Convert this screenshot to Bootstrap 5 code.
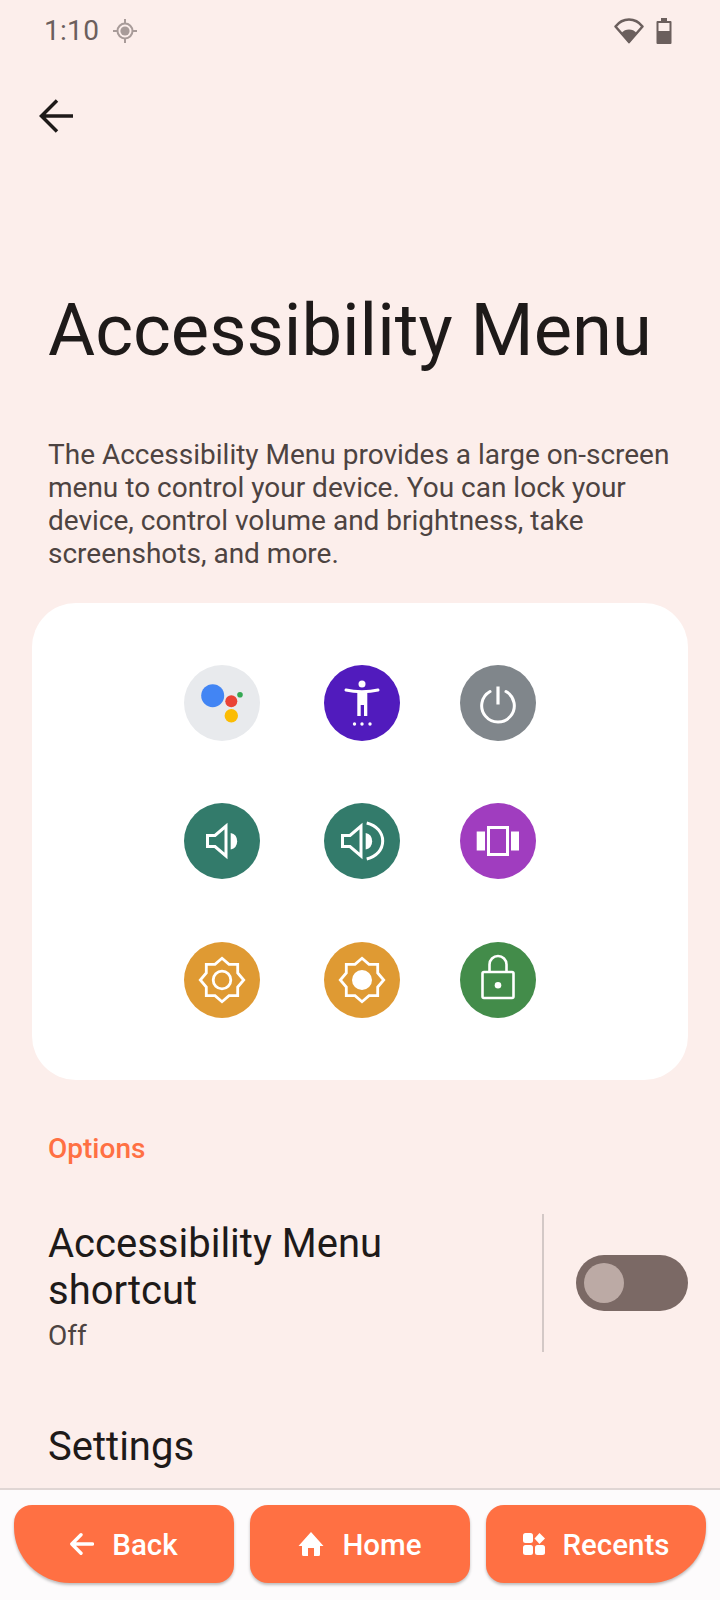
<!DOCTYPE html>
<html lang="en">
<head>
    <meta charset="UTF-8">
    <meta name="viewport" content="width=device-width, initial-scale=1.0">
    <title>Accessibility Menu</title>
    <link href="https://cdn.jsdelivr.net/npm/bootstrap@5.3.0/dist/css/bootstrap.min.css" rel="stylesheet">
    <style>
        html, body { height: 1600px; overflow: hidden; }
        body {
            background: #fceeeb;
            color: #1e1a19;
            font-family: Roboto, "Liberation Sans", sans-serif;
        }
        .screen { height: 1600px; }
        .status-strip { height: 62px; padding: 0 48px 0 44px; color: #6b5f5d; }
        .status-time { font-size: 28px; line-height: 1; letter-spacing: 0.3px; }
        .status-spot { margin-left: 14px; }
        .status-wifi { margin-left: auto; }
        .status-batt { margin-left: 12px; }
        .tool-strip { height: 108px; padding-left: 32px; }
        .page-title { font-size: 72.3px; font-weight: 400; line-height: 84px; margin: 0; padding: 119px 48px 0; }
        .page-desc { font-size: 28px; line-height: 33px; color: #4d4341; margin: 0; padding: 65px 48px 0; }
        .demo-card { margin: 33px 32px 0; height: 477px; border-radius: 44px; padding: 62px 0 0 152px; }
        .icon-grid { display: grid; grid-template-columns: 140px 136px 76px; grid-template-rows: 138px 139px 76px; }
        .icon-grid svg { display: block; width: 76px; height: 76px; }
        .section-label { color: #ff7043; font-size: 28px; font-weight: 500; line-height: 32px; padding: 53px 48px 0; }
        .option-row { padding: 49px 32px 0 48px; }
        .option-text { width: 495px; height: 138px; padding: 6px 48px 0 0; }
        .option-title { font-size: 40px; line-height: 47px; }
        .option-sub { font-size: 28px; line-height: 32px; color: #4d4341; margin-top: 6px; }
        .option-sep { width: 2px; height: 138px; background: #d3c8c6; }
        .toggle-track { width: 112px; height: 56px; margin-left: 32px; border-radius: 28px; background: #7b6965; padding: 8px; }
        .toggle-knob { width: 40px; height: 40px; border-radius: 50%; background: #bcaaa5; }
        .settings-row { font-size: 40px; line-height: 47px; padding: 71px 48px 0; }
        .bottom-strip { height: 112px; background: #fdfbfc; border-top: 2px solid #e0d6d4; padding: 15px 14px 0; gap: 16px; }
        .nav-key {
            width: 220px; height: 78px; padding: 0; gap: 18px;
            background: #ff7043; border: 0; border-radius: 18px; color: #fff;
            font-size: 29.5px; font-weight: 500; line-height: 1;
            box-shadow: 0 2px 3px rgba(0, 0, 0, .25);
        }
        .nav-key:hover { background: #ff7043; color: #fff; }
        .nav-key span { margin-top: 4px; }
        .nav-key.key-first { border-bottom-left-radius: 56px; }
        .nav-key.key-last { border-bottom-right-radius: 56px; }
    </style>
</head>
<body>
    <div class="screen d-flex flex-column">
        <div class="flex-grow-1 overflow-hidden">
            <div class="status-strip d-flex align-items-center">
                <span class="status-time">1:10</span>
                <svg class="status-spot" width="24" height="24" viewBox="0 0 24 24">
                    <circle cx="12" cy="12" r="7.5" fill="none" stroke="#a89b99" stroke-width="2"/>
                    <circle cx="12" cy="12" r="4.6" fill="#a89b99"/>
                    <path d="M12 0v4M12 20v4M0 12h4M20 12h4" stroke="#a89b99" stroke-width="2"/>
                </svg>
                <svg class="status-wifi" width="30" height="26" viewBox="0 0 30 26">
                    <path d="M1.5 8.500C5 4 10 1.500 15 1.500s10 2.500 13.500 7L15 24z" fill="none" stroke="#6b5f5d" stroke-width="2.500" stroke-linejoin="round"/>
                    <path d="M7.500 15C9.500 12.500 12 11.500 15 11.500s5.500 1 7.500 3.500L15 25.500z" fill="#6b5f5d"/>
                </svg>
                <svg class="status-batt" width="16" height="26" viewBox="0 0 16 26">
                    <path d="M5 0h6v3h3.500a1 1 0 0 1 1 1v21a1 1 0 0 1-1 1H1.500a1 1 0 0 1-1-1V4a1 1 0 0 1 1-1H5z" fill="#6b5f5d"/>
                    <rect x="2.500" y="5" width="11" height="8" fill="#fceeeb"/>
                </svg>
            </div>
            <div class="tool-strip d-flex align-items-center">
                <svg width="48" height="48" viewBox="0 0 48 48">
                    <path d="M41 24H10M25 8.500 9.500 24 25 39.500" fill="none" stroke="#1e1a19" stroke-width="3.500"/>
                </svg>
            </div>
            <h1 class="page-title">Accessibility Menu</h1>
            <p class="page-desc">The Accessibility Menu provides a large on-screen menu to control your device. You can lock your device, control volume and brightness, take screenshots, and more.</p>
            <div class="demo-card bg-white">
                <div class="icon-grid">
                    <svg viewBox="0 0 76 76">
                        <circle cx="38" cy="38" r="38" fill="#e8eaed"/>
                        <circle cx="28.700" cy="30.700" r="11.500" fill="#4285f4"/>
                        <circle cx="47.300" cy="36.300" r="6" fill="#ea4335"/>
                        <circle cx="47.300" cy="50.700" r="6.700" fill="#fbbc04"/>
                        <circle cx="56" cy="29.700" r="2.800" fill="#34a853"/>
                    </svg>
                    <svg viewBox="0 0 76 76">
                        <circle cx="38" cy="38" r="38" fill="#511bbd"/>
                        <circle cx="38" cy="19" r="3.500" fill="#fff"/>
                        <path d="M22 25c5 1.200 10.500 1.700 16 1.700s11-.5 16-1.700" fill="none" stroke="#fff" stroke-width="3" stroke-linecap="round"/>
                        <path d="M33.300 26h10v25H40V40h-3.300v11h-3.400z" fill="#fff"/>
                        <circle cx="30.500" cy="59" r="1.700" fill="#fff"/>
                        <circle cx="38" cy="59" r="1.700" fill="#fff"/>
                        <circle cx="46" cy="59" r="1.700" fill="#fff"/>
                    </svg>
                    <svg viewBox="0 0 76 76">
                        <circle cx="38" cy="38" r="38" fill="#80868b"/>
                        <path d="M30 26.500a16.300 16.300 0 1 0 16 0" fill="none" stroke="#fff" stroke-width="3" stroke-linecap="round"/>
                        <path d="M38 21.500v18" stroke="#fff" stroke-width="3.200"/>
                    </svg>
                    <svg viewBox="0 0 76 76">
                        <circle cx="38" cy="38" r="38" fill="#337b6b"/>
                        <path d="M23.500 32.500H31l11-9.500v30l-11-9.500h-7.500z" fill="none" stroke="#fff" stroke-width="3"/>
                        <path d="M46.700 30a8.500 8.500 0 0 1 0 16.500z" fill="#fff"/>
                    </svg>
                    <svg viewBox="0 0 76 76">
                        <circle cx="38" cy="38" r="38" fill="#337b6b"/>
                        <path d="M18.500 32.500H26l11-9.500v30l-11-9.500h-7.500z" fill="none" stroke="#fff" stroke-width="3"/>
                        <path d="M41.700 30a8.500 8.500 0 0 1 0 16.500z" fill="#fff"/>
                        <path d="M42.700 20c10 2.500 16 9.500 16 18s-6 15.500-16 18" fill="none" stroke="#fff" stroke-width="3"/>
                    </svg>
                    <svg viewBox="0 0 76 76">
                        <circle cx="38" cy="38" r="38" fill="#a03dbf"/>
                        <rect x="28.500" y="24.500" width="19" height="27" fill="none" stroke="#fff" stroke-width="3"/>
                        <rect x="16.700" y="28.500" width="8.300" height="19" fill="#fff"/>
                        <rect x="51" y="28.500" width="8" height="19" fill="#fff"/>
                    </svg>
                    <svg viewBox="0 0 76 76">
                        <circle cx="38" cy="38" r="38" fill="#df9a33"/>
                        <path d="M38 16.300 45 22.300h8.700V31L59.700 38 53.700 45v8.700H45L38 59.700 31 53.700h-8.700V45L16.300 38 22.300 31v-8.700H31z" fill="none" stroke="#fff" stroke-width="2.800"/>
                        <circle cx="38" cy="38" r="8.800" fill="none" stroke="#fff" stroke-width="2.800"/>
                    </svg>
                    <svg viewBox="0 0 76 76">
                        <circle cx="38" cy="38" r="38" fill="#df9a33"/>
                        <path d="M38 16.300 45 22.300h8.700V31L59.700 38 53.700 45v8.700H45L38 59.700 31 53.700h-8.700V45L16.300 38 22.300 31v-8.700H31z" fill="none" stroke="#fff" stroke-width="2.800"/>
                        <circle cx="38" cy="38" r="10" fill="#fff"/>
                    </svg>
                    <svg viewBox="0 0 76 76">
                        <circle cx="38" cy="38" r="38" fill="#438c4a"/>
                        <rect x="22.500" y="30" width="31" height="26" rx="1.500" fill="none" stroke="#fff" stroke-width="2.600"/>
                        <path d="M29.500 30v-7.500a8.500 8.500 0 0 1 17 0V30" fill="none" stroke="#fff" stroke-width="2.600"/>
                        <circle cx="38" cy="43.300" r="3.300" fill="#fff"/>
                    </svg>
                </div>
            </div>
            <div class="section-label">Options</div>
            <div class="option-row d-flex align-items-center">
                <div class="option-text">
                    <div class="option-title">Accessibility Menu shortcut</div>
                    <div class="option-sub">Off</div>
                </div>
                <div class="option-sep"></div>
                <div class="toggle-track"><div class="toggle-knob"></div></div>
            </div>
            <div class="settings-row">Settings</div>
        </div>
        <div class="bottom-strip d-flex flex-shrink-0">
            <button class="btn nav-key key-first d-flex align-items-center justify-content-center">
                <svg width="24" height="22" viewBox="0 0 24 22"><path d="M22.500 11H3M11 1.800 1.800 11 11 20.200" fill="none" stroke="#fff" stroke-width="3.400" stroke-linecap="round" stroke-linejoin="round"/></svg>
                <span>Back</span>
            </button>
            <button class="btn nav-key d-flex align-items-center justify-content-center">
                <svg width="26" height="24" viewBox="0 0 26 24"><path d="M13 0 25.500 14H22v8.500a1.500 1.500 0 0 1-1.500 1.500H16v-8h-6v8H5.500A1.500 1.500 0 0 1 4 22.500V14H.5z" fill="#fff"/></svg>
                <span>Home</span>
            </button>
            <button class="btn nav-key key-last d-flex align-items-center justify-content-center">
                <svg width="22" height="22" viewBox="0 0 22 22" fill="#fff">
                    <rect x="0" y="0" width="10" height="10" rx="2.500"/>
                    <path d="M16.500 0 22 5.500 16.500 11 11.500 5.500z"/>
                    <rect x="0" y="12" width="10" height="10" rx="2.500"/>
                    <rect x="12" y="12" width="10" height="10" rx="2.500"/>
                </svg>
                <span>Recents</span>
            </button>
        </div>
    </div>
</body>
</html>
